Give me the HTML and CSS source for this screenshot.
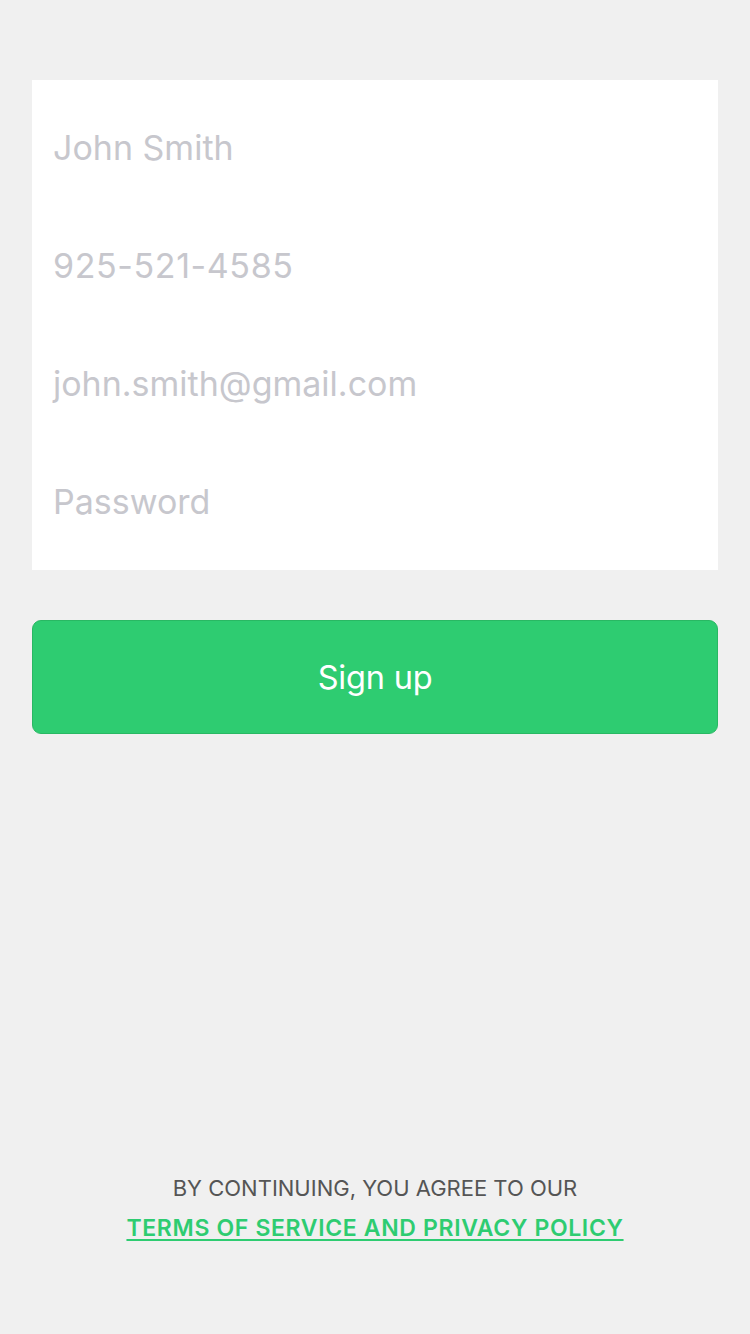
FILE: index.html
```html
<!DOCTYPE html>
<html>
<head>
<meta charset="utf-8">
<link rel="stylesheet" href="styles.css">
</head>
<body>
<div class="screen">
  <div class="form">
    <div class="field">John Smith</div>
    <div class="field field-phone">925-521-4585</div>
    <div class="field">john.smith@gmail.com</div>
    <div class="field">Password</div>
  </div>
  <button class="signup">Sign up</button>
  <div class="spacer"></div>
  <div class="legal">
    <div class="agree">BY CONTINUING, YOU AGREE TO OUR</div>
    <a class="terms" href="#">TERMS OF SERVICE AND PRIVACY POLICY</a>
  </div>
</div>
</body>
</html>
```

FILE: styles.css
```css
html, body {
  margin: 0;
  padding: 0;
  background: #f0f0f0;
}
.screen {
  width: 750px;
  height: 1334px;
  box-sizing: border-box;
  padding: 80px 32px 0 32px;
  display: flex;
  flex-direction: column;
  font-family: Inter, Roboto, "Liberation Sans", sans-serif;
}
.form {
  background: #fff;
  padding: 8px 0 10px 0;
  display: flex;
  flex-direction: column;
}
.field {
  height: 118px;
  display: flex;
  align-items: center;
  padding-left: 21px;
  font-size: 34px;
  color: #c7c7cd;
}
.field-phone {
  letter-spacing: 0.6px;
}
.signup {
  margin-top: 50px;
  height: 114px;
  background: #2ecc71;
  border: 1px solid #29b863;
  border-radius: 9px;
  color: #fff;
  font-family: inherit;
  font-size: 32.5px;
  letter-spacing: -0.2px;
  padding: 0;
}
.spacer {
  flex: 1;
}
.legal {
  display: flex;
  flex-direction: column;
  align-items: center;
  padding-bottom: 93px;
}
.agree {
  font-size: 22px;
  color: #555;
  line-height: 26px;
}
.terms {
  margin-top: 14px;
  font-size: 23px;
  line-height: 26px;
  font-weight: 600;
  letter-spacing: 0.65px;
  color: #2ecc71;
  text-decoration: underline;
  text-underline-offset: 3px;
  text-decoration-thickness: 2px;
}
```
